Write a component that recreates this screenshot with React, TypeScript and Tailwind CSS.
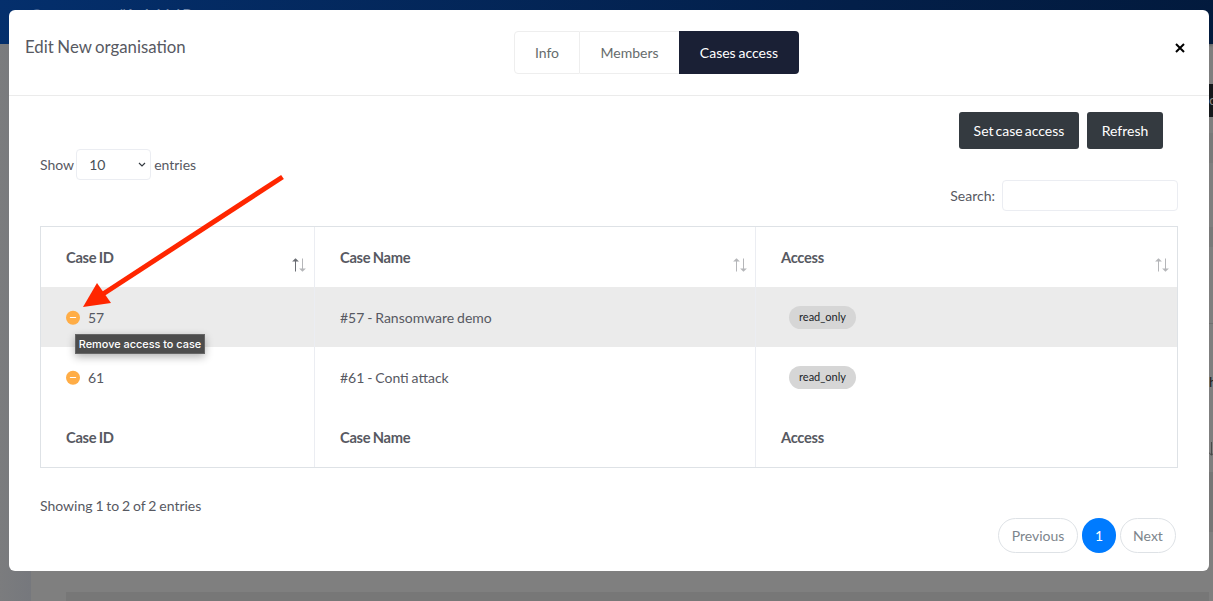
import React from "react";

function SortIcon({ up = false }: { up?: boolean }) {
  return (
    <svg width="16" height="14" viewBox="0 0 16 14" fill="none" strokeWidth="1" className="shrink-0">
      <g opacity={up ? 0.9 : 0.45}>
        <path d="M4.5 13.5V1" stroke="#5c5f66" />
        <path d="M4.5 .2 7.9 3.6H1.1z" fill="#5c5f66" />
      </g>
      <g opacity="0.45">
        <path d="M11.5 .5V13" stroke="#5c5f66" />
        <path d="M11.5 13.8 8.1 10.4h6.8z" fill="#5c5f66" />
      </g>
    </svg>
  );
}

function HeadCell({ label, up, last }: { label: string; up?: boolean; last?: boolean }) {
  return (
    <div className={`flex justify-between pl-[25px] pr-[7px] ${last ? "" : "border-r border-[#ebedf2]"}`}>
      <span className="pt-[20px] text-[14.7px] font-bold leading-[21px] tracking-[-0.3px]">{label}</span>
      <span className="pt-[31px]"><SortIcon up={up} /></span>
    </div>
  );
}

function FootCell({ label, last }: { label: string; last?: boolean }) {
  return (
    <div className={`flex items-center pl-[25px] text-[14.7px] font-bold leading-[20px] tracking-[-0.3px] ${last ? "" : "border-r border-[#ebedf2]"}`}>{label}</div>
  );
}

const cols = "grid grid-cols-[274px_441px_1fr]";

function CaseRow({ id, name, active }: { id: string; name: string; active?: boolean }) {
  return (
    <div className={`${cols} h-[60px] ${active ? "bg-[#ebebeb]" : ""}`}>
      <div className="relative flex items-center border-r border-[#ebedf2] pl-[25px]">
        <svg width="14" height="15" viewBox="0 0 14 15" className="mr-[8px]">
          <circle cx="7" cy="7.8" r="7" fill="#ffad46" />
          <path d="M4.4 7.5h5.2" stroke="#fff" strokeWidth="1.2" strokeLinecap="round" />
        </svg>
        <span className="pt-px">{id}</span>
        {active && (
          <div className="absolute left-[34px] top-[47px] z-10 flex h-[20px] w-[130px] items-center justify-center whitespace-nowrap border border-[#666] bg-[#4d4d4d] font-['Inter',sans-serif] text-[10.9px] font-medium [word-spacing:0px] text-white shadow-[0_3px_8px_rgba(0,0,0,0.3)]">
            Remove access to case
          </div>
        )}
      </div>
      <div className="flex items-center border-r border-[#ebedf2] pl-[25px] pt-px">{name}</div>
      <div className="flex items-center pl-[33px]">
        <span className="flex h-[23px] w-[67px] items-center justify-center rounded-full bg-[#d6d6d6] text-[11px] text-[#212529]">read_only</span>
      </div>
    </div>
  );
}

function Backdrop() {
  return (
    <div className="flex h-full flex-col bg-[#7f7f7f]">
      <div className="h-[44px] shrink-0 overflow-hidden bg-[linear-gradient(100deg,#042f6c_0%,#031f49_70%,#021a3d_100%)] shadow-[0_1px_3px_rgba(0,0,0,0.3)]">
        <div className="flex whitespace-nowrap pl-[31px] pt-[4px] text-[14px] leading-[20px] text-[#6f86a8]">
          <span className="w-[87px] shrink-0 text-[#3d5c8c]">Current case</span>
          <span className="font-bold">#1 - Initial Demo</span>
        </div>
      </div>
      <div className="flex flex-1">
        <div className="w-[31px] bg-linear-to-r from-[#7b7c7e] to-[#76787d]" />
        <div className="flex flex-1 flex-col justify-end pl-[35px]">
          <div className="h-[9px] bg-[#777]" />
        </div>
        <div className="w-[4px] overflow-hidden text-[14px] text-[#1b1b1b]">
          <div className="mt-[40px] h-[33px] bg-[#15181b] pt-[5px] text-[#888]">c</div>
          <div className="mt-[16px] h-[30px] bg-[#797979]" />
          <div className="mt-[64px] h-[20px] bg-[#797979]" />
          <div className="mt-[76px] border-t border-[#707070]" />
          <div className="mt-[48px] leading-[20px]">h</div>
          <svg className="mt-[50px]" width="4" height="14" viewBox="0 0 4 14">
            <path d="M2.5 0v13M0 10.5l2.5 2.8L4 11.5" stroke="#4a4a4a" fill="none" />
          </svg>
          <div className="mt-[16px] h-[60px] bg-[#767676]" />
        </div>
      </div>
    </div>
  );
}

export default function App() {
  return (
    <div className="relative h-[601px] w-[1213px] overflow-hidden font-['Lato',sans-serif] text-[14px] text-[#575962] [word-spacing:-0.75px]">
      <Backdrop />
      <div className="absolute left-[9px] top-[10px] flex h-[561px] w-[1200px] flex-col rounded-[6px] bg-white">
        <header className="grid h-[86px] shrink-0 grid-cols-[505px_285px_1fr] border-b border-[#ebebeb]">
          <h1 className="pl-[16px] pt-[25px] text-[16.8px] leading-[24px]">Edit New organisation</h1>
          <nav className="mt-[21px] flex h-[43px] text-[#666c6c]">
            <span className="flex w-[66px] items-center justify-center rounded-l-[4px] border border-[#eee]">Info</span>
            <span className="flex w-[99px] items-center justify-center border-y border-[#eee]">Members</span>
            <span className="flex flex-1 items-center justify-center rounded-r-[4px] bg-[#1a2035] text-white">Cases access</span>
          </nav>
          <button className="mr-[24px] mt-[33px] flex h-[10px] justify-end" aria-label="Close">
            <svg width="10" height="10" viewBox="0 0 10 10"><path d="M1 1l8 8M9 1 1 9" stroke="#000" strokeWidth="2" /></svg>
          </button>
        </header>
        <main className="flex flex-1 flex-col pl-[31px] pr-[31px] pt-[16px]">
          <div className="flex h-[37px] justify-end gap-[8px] pr-[15px] text-white">
            <button className="w-[120px] rounded-[3px] bg-[#343a40] pb-px [word-spacing:-1.5px]">Set case access</button>
            <button className="w-[76px] rounded-[3px] bg-[#343a40] pb-px">Refresh</button>
          </div>
          <div className="flex h-[31px] items-center">
            <span>Show</span>
            <span className="ml-[2px] mr-[3px] flex h-[31px] w-[75px] items-center justify-between rounded-[4px] border border-[#ebedf2] pl-[12px] pr-[4px] text-[#495057]">
              10
              <svg width="8" height="6" viewBox="0 0 8 6" fill="none" stroke="#343a40" strokeWidth="1.2"><path d="m1 1 3 3 3-3" /></svg>
            </span>
            <span>entries</span>
          </div>
          <div className="flex h-[31px] items-center justify-end gap-[7px]">
            <span>Search:</span>
            <input aria-label="Search" className="h-[31px] w-[176px] rounded-[4px] border border-[#ebedf2]" />
          </div>
          <section className="mt-[15px] h-[242px] border border-[#dee2e6]">
            <div className={`${cols} h-[60px]`}>
              <HeadCell label="Case ID" up />
              <HeadCell label="Case Name" />
              <HeadCell label="Access" last />
            </div>
            <CaseRow id="57" name="#57 - Ransomware demo" active />
            <CaseRow id="61" name="#61 - Conti attack" />
            <div className={`${cols} h-[60px]`}>
              <FootCell label="Case ID" />
              <FootCell label="Case Name" />
              <FootCell label="Access" last />
            </div>
          </section>
          <div className="mt-[27px] leading-[21px]">Showing 1 to 2 of 2 entries</div>
          <div className="mt-[2px] flex h-[35px] justify-end gap-[4px] pr-[2px] text-[#7d858c]">
            <button className="w-[80px] rounded-full border border-[#dee2e6]">Previous</button>
            <button className="w-[34px] rounded-full bg-[#007bff] text-white">1</button>
            <button className="w-[56px] rounded-full border border-[#dee2e6]">Next</button>
          </div>
        </main>
      </div>
      <svg className="absolute left-[80px] top-[170px]" width="210" height="142" viewBox="80 170 210 142">
        <path d="M282.5 177 103 294" stroke="#ff2600" strokeWidth="5" />
        <path d="M83 307 97 283l14 20z" fill="#ff2600" />
      </svg>
    </div>
  );
}
